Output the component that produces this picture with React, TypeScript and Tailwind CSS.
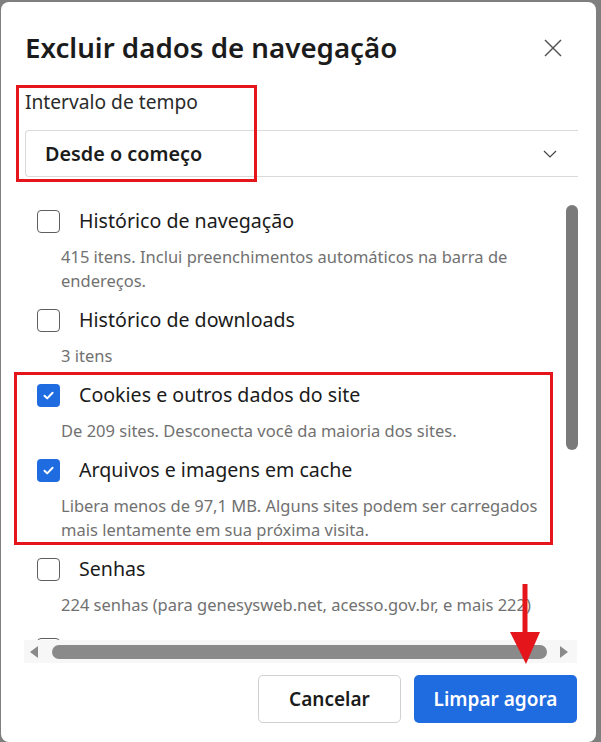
import React from "react";

const font = { fontFamily: '"Noto Sans", "Open Sans", sans-serif' };

function Checkbox({ checked }: { checked: boolean }) {
  if (checked) {
    return (
      <div className="w-[23px] h-[23px] rounded-[4px] bg-[#1f6be0] flex items-center justify-center shrink-0">
        <svg width="13" height="13" viewBox="0 0 13 13">
          <path d="M2.5 6.8 L5.2 9.4 L10.6 3.8" fill="none" stroke="white" strokeWidth="2" strokeLinecap="round" strokeLinejoin="round" />
        </svg>
      </div>
    );
  }
  return <div className="w-[23px] h-[23px] rounded-[4px] border-[1.5px] border-[#5f5f5f] bg-white shrink-0" />;
}

function Item({ label, desc, checked, extra }: { label: string; desc: string[]; checked: boolean; extra?: string }) {
  return (
    <div className={"pb-[10px] " + (extra ?? "")}>
      <div className="flex items-center h-[34px]">
        <Checkbox checked={checked} />
        <span className="ml-[19px] text-[19.6px] text-[#1b1b1b] whitespace-nowrap">{label}</span>
      </div>
      <div className="mt-[7px] pl-[24px] text-[16.5px] leading-[24px] text-[#717171]">
        {desc.map((d, i) => (
          <div key={i} className="whitespace-nowrap">{d}</div>
        ))}
      </div>
    </div>
  );
}

export default function App() {
  return (
    <div className="relative w-[601px] h-[742px] bg-[#7f7f7f] pl-px pt-[2px] pr-[5px] overflow-hidden" style={font}>
      <div className="h-[740px] bg-white rounded-[8px] flex flex-col overflow-hidden">
        <div className="mt-[28px] h-[36px] flex items-center justify-between pl-[24px] pr-[34px]">
          <h1 className="text-[27.7px] font-semibold text-[#1b1b1b] leading-none">Excluir dados de navegação</h1>
          <svg width="18" height="18" viewBox="0 0 18 18">
            <path d="M1 1 L17 17 M17 1 L1 17" stroke="#555" strokeWidth="1.5" />
          </svg>
        </div>
        <div className="mt-[24px] pl-[24px] text-[19.2px] leading-[24px] text-[#2b2b2b]">Intervalo de tempo</div>
        <div className="mt-[16px] ml-[24px] mr-[18px] h-[47px] border border-r-0 border-[#dadada] rounded-l-[4px] flex items-center justify-between pl-[19px] pr-[21px]">
          <span className="text-[19.8px] font-semibold text-[#1b1b1b]">Desde o começo</span>
          <svg width="14" height="8" viewBox="0 0 14 8">
            <path d="M1 1 L7 7 L13 1" fill="none" stroke="#444" strokeWidth="1.2" />
          </svg>
        </div>
        <div className="mt-[25px] h-[438px] flex">
          <div className="flex-1 overflow-hidden pl-[36px] pt-[2px]">
            <Item label="Histórico de navegação" desc={["415 itens. Inclui preenchimentos automáticos na barra de", "endereços."]} checked={false} />
            <Item label="Histórico de downloads" desc={["3 itens"]} checked={false} />
            <Item label="Cookies e outros dados do site" desc={["De 209 sites. Desconecta você da maioria dos sites."]} checked={true} />
            <Item label="Arquivos e imagens em cache" desc={["Libera menos de 97,1 MB. Alguns sites podem ser carregados", "mais lentamente em sua próxima visita."]} checked={true} />
            <Item label="Senhas" desc={["224 senhas (para genesysweb.net, acesso.gov.br, e mais 222)"]} checked={false} />
            <Item label="Dados de preenchimento automático de formulário" desc={["Inclui formulários e cartões"]} checked={false} extra="pt-[5px]" />
          </div>
          <div className="w-[12px] mr-[18px] ml-[1px] pt-[3px]">
            <div className="h-[245px] w-[12px] rounded-full bg-[#7a7a7a]" />
          </div>
        </div>
        <div className="ml-[23px] mr-[19px] h-[23px] bg-[#f7f7f7] flex items-center pl-[6px] pr-[9px]">
          <svg width="8" height="12" viewBox="0 0 8 12"><path d="M8 0 L0 6 L8 12 Z" fill="#8a8a8a" /></svg>
          <div className="flex-1 h-[14px] rounded-full bg-[#8a8a8a] ml-[14px] mr-[13px]" />
          <svg width="8" height="12" viewBox="0 0 8 12"><path d="M0 0 L8 6 L0 12 Z" fill="#8a8a8a" /></svg>
        </div>
        <div className="mt-[12px] flex justify-end gap-[13px] pr-[19px]">
          <button className="w-[143px] h-[48px] rounded-[5px] border border-[#d1d1d1] bg-white text-[19px] font-semibold text-[#1b1b1b]">Cancelar</button>
          <button className="w-[163px] h-[48px] rounded-[5px] bg-[#1f6be0] text-[19px] font-semibold text-white">Limpar agora</button>
        </div>
      </div>
      <div className="absolute left-[16px] top-[85px] w-[241px] h-[97px] border-[3px] border-[#e4161b]" />
      <div className="absolute left-[14px] top-[372px] w-[539px] h-[173px] border-[3px] border-[#e4161b]" />
      <svg className="absolute left-[505px] top-[580px]" width="40" height="90" viewBox="0 0 40 90">
        <path d="M17.5 4 L22.5 4 L22.5 52 L17.5 52 Z" fill="#e4161b" />
        <path d="M5 52 L35 52 L21 84 Z" fill="#e4161b" />
      </svg>
    </div>
  );
}
